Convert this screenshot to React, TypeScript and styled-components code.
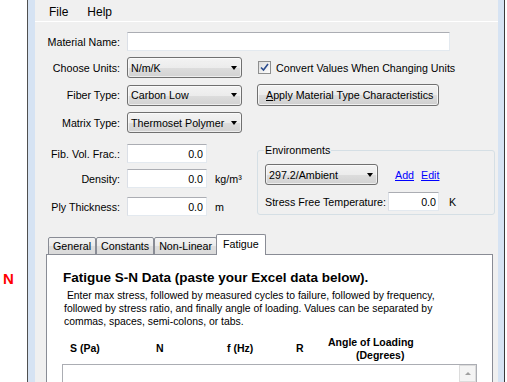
import React from "react";
import styled, { createGlobalStyle } from "styled-components";

const Global = createGlobalStyle`
  html, body { margin: 0; padding: 0; background: #fff; }
  body { font-family: "Liberation Sans", Arial, sans-serif; font-size: 10.7px; color: #000; }
  * { box-sizing: border-box; }
`;

const Page = styled.div`
  display: flex;
  width: 507px;
  height: 382px;
  overflow: hidden;
  background: #fff;
`;

const Gutter = styled.div`
  width: 27px;
  flex: none;
  padding: 271px 0 0 3px;
`;

const Marker = styled.div`
  color: #f00;
  font-weight: bold;
  font-size: 15px;
  line-height: 16px;
`;

const Frame = styled.div`
  flex: none;
  width: 478px;
  height: 100%;
  display: flex;
  border-left: 1px solid #505050;
  border-right: 1px solid #3a3a3a;
`;

const Edge = styled.div<{ $w: number }>`
  flex: none;
  width: ${(p) => p.$w}px;
  background: #d6e3f3;
`;

const Client = styled.div`
  flex: 1;
  min-width: 0;
  background: #f0f0f0;
  display: flex;
  flex-direction: column;
`;

const MenuBar = styled.div`
  height: 22px;
  flex: none;
  border-bottom: 1px solid #fff;
  display: flex;
  align-items: center;
  padding: 2px 0 0 14px;
  gap: 19px;
  font-size: 12px;
`;

const Form = styled.div`
  padding-top: 10px;
  display: flex;
  flex-direction: column;
  gap: 6px;
`;

const Row = styled.div<{ $mt?: number }>`
  display: flex;
  align-items: center;
  margin-top: ${(p) => p.$mt ?? 0}px;
`;

const Label = styled.label`
  width: 85px;
  flex: none;
  text-align: right;
  margin-right: 7px;
  white-space: nowrap;
`;

const TextBox = styled.input<{ $w: number; $right?: boolean; $pr?: number }>`
  width: ${(p) => p.$w}px;
  height: 19px;
  flex: none;
  border: 1px solid #e3e9ef;
  border-top-color: #abadb3;
  border-left-color: #dbdfe6;
  background: #fff;
  font: inherit;
  color: #000;
  padding: 0 ${(p) => p.$pr ?? 3}px 0 3px;
  text-align: ${(p) => (p.$right ? "right" : "left")};
  outline: none;
`;

const Combo = styled.div<{ $w: number }>`
  width: ${(p) => p.$w}px;
  height: 21px;
  flex: none;
  border: 1px solid #707070;
  border-radius: 3px;
  background: linear-gradient(#f3f3f3 0%, #ececec 50%, #dddddd 51%, #d2d2d2 100%);
  box-shadow: inset 0 0 0 1px rgba(255, 255, 255, 0.6);
  display: flex;
  align-items: center;
  justify-content: space-between;
  padding: 0 4px 0 3px;
  white-space: nowrap;
`;

const Arrow = styled.span`
  width: 0;
  height: 0;
  flex: none;
  border-left: 3.5px solid transparent;
  border-right: 3.5px solid transparent;
  border-top: 4px solid #000;
`;

const CheckWrap = styled.div`
  display: flex;
  align-items: center;
  margin-left: 16px;
  gap: 5px;
  white-space: nowrap;
`;

const CheckBox = styled.span`
  width: 13px;
  height: 13px;
  flex: none;
  border: 1px solid #8e8f8f;
  background: linear-gradient(135deg, #dcdcdc, #fdfdfd);
  display: flex;
  align-items: center;
  justify-content: center;
`;

const Button = styled.button`
  width: 182px;
  height: 22px;
  flex: none;
  margin-left: 15px;
  border: 1px solid #707070;
  border-radius: 3px;
  background: linear-gradient(#f2f2f2 0%, #ebebeb 50%, #dddddd 51%, #cfcfcf 100%);
  box-shadow: inset 0 0 0 1px rgba(255, 255, 255, 0.7);
  font: inherit;
  color: #000;
  text-align: left;
  padding: 0 0 0 8px;
  white-space: nowrap;
`;

const Lower = styled.div`
  display: flex;
  align-items: flex-start;
  margin-top: 11px;
`;

const LeftCol = styled.div`
  width: 222px;
  flex: none;
  display: flex;
  flex-direction: column;
`;

const Unit = styled.span<{ $ml?: number }>`
  margin-left: ${(p) => p.$ml ?? 8}px;
  white-space: nowrap;
`;

const Group = styled.fieldset`
  width: 238px;
  flex: none;
  margin: 0;
  min-width: 0;
  padding: 7px 7px 3px 7px;
  border: 1px solid #d5dfe5;
  border-radius: 3px;
`;

const Legend = styled.legend`
  padding: 0 1px;
  margin-left: -1px;
  font-size: 10.7px;
  line-height: 13px;
`;

const Link = styled.a<{ $ml: number }>`
  color: #0000ff;
  text-decoration: underline;
  margin-left: ${(p) => p.$ml}px;
  cursor: pointer;
`;

const PlainLabel = styled.span<{ $w: number }>`
  width: ${(p) => p.$w}px;
  flex: none;
  white-space: nowrap;
`;

const Tabs = styled.div`
  margin: 18px 5px 0 11px;
  flex: 1;
  min-height: 0;
  display: flex;
  flex-direction: column;
`;

const TabStrip = styled.div`
  height: 21px;
  flex: none;
  display: flex;
  align-items: flex-end;
  padding-left: 2px;
  position: relative;
  z-index: 1;
`;

const Tab = styled.div<{ $active?: boolean }>`
  height: ${(p) => (p.$active ? 21 : 18)}px;
  padding: 0 ${(p) => (p.$active ? 6 : 4)}px ${(p) => (p.$active ? 2 : 0)}px;
  margin-left: ${(p) => (p.$active ? -1 : 0)}px;
  border: 1px solid #898c95;
  border-bottom: ${(p) => (p.$active ? "none" : "1px solid #898c95")};
  border-radius: 2px 2px 0 0;
  background: ${(p) =>
    p.$active ? "#fff" : "linear-gradient(#f3f3f3 0%, #ebebeb 50%, #dedede 51%, #dadada 100%)"};
  display: flex;
  align-items: center;
  white-space: nowrap;
`;

const Panel = styled.div`
  flex: 1;
  margin-top: -1px;
  background: #fff;
  border: 1px solid #898c95;
  border-bottom: none;
  display: flex;
  flex-direction: column;
`;

const Heading = styled.div`
  font-weight: bold;
  font-size: 13.5px;
  line-height: 16px;
  padding: 15px 0 0 16px;
  white-space: nowrap;
`;

const Para = styled.div`
  margin: 3px 0 0 17px;
  font-size: 10.4px;
  line-height: 13px;
  white-space: pre;
`;

const HeaderRow = styled.div`
  margin: 7px 0 0 23px;
  height: 27px;
  display: grid;
  grid-template-columns: 86px 71px 69px 32px auto;
  align-items: center;
  font-weight: bold;
  font-size: 10.5px;
  line-height: 13px;
`;

const Indent = styled.span`
  display: block;
  padding-left: 28px;
`;

const DataBox = styled.div`
  margin: 2px 0 0 15px;
  width: 415px;
  flex: 1;
  border: 1px solid #abadb3;
  border-bottom: none;
  display: flex;
  justify-content: flex-end;
`;

const ScrollCol = styled.div`
  width: 17px;
  flex: none;
  background: #f4f4f4;
`;

const ScrollBtn = styled.div`
  height: 17px;
  border: 1px solid #dcdcdc;
  background: #f4f4f4;
  display: flex;
  align-items: center;
  justify-content: center;
`;

const UpArrow = styled.span`
  width: 0;
  height: 0;
  border-left: 3.5px solid transparent;
  border-right: 3.5px solid transparent;
  border-bottom: 3px solid #a0a0a0;
`;

export default function App() {
  return (
    <>
      <Global />
      <Page>
        <Gutter>
          <Marker>N</Marker>
        </Gutter>
        <Frame>
          <Edge $w={7} />
          <Client>
            <MenuBar>
              <span>File</span>
              <span>Help</span>
            </MenuBar>
            <Form>
              <Row>
                <Label>Material Name:</Label>
                <TextBox $w={323} defaultValue="" readOnly />
              </Row>
              <Row>
                <Label>Choose Units:</Label>
                <Combo $w={115}>
                  <span>N/m/K</span>
                  <Arrow />
                </Combo>
                <CheckWrap>
                  <CheckBox>
                    <svg width="9" height="9" viewBox="0 0 9 9">
                      <path d="M1 4.5 L3.5 7 L8 1" fill="none" stroke="#2a4b8d" strokeWidth="1.6" />
                    </svg>
                  </CheckBox>
                  <span>Convert Values When Changing Units</span>
                </CheckWrap>
              </Row>
              <Row>
                <Label>Fiber Type:</Label>
                <Combo $w={115}>
                  <span>Carbon Low</span>
                  <Arrow />
                </Combo>
                <Button>
                  <u>A</u>pply Material Type Characteristics
                </Button>
              </Row>
              <Row>
                <Label>Matrix Type:</Label>
                <Combo $w={115}>
                  <span>Thermoset Polymer</span>
                  <Arrow />
                </Combo>
              </Row>
            </Form>
            <Lower>
              <LeftCol>
                <Row>
                  <Label>Fib. Vol. Frac.:</Label>
                  <TextBox $w={80} $right defaultValue="0.0" readOnly />
                </Row>
                <Row $mt={6}>
                  <Label>Density:</Label>
                  <TextBox $w={80} $right defaultValue="0.0" readOnly />
                  <Unit>kg/m³</Unit>
                </Row>
                <Row $mt={9}>
                  <Label>Ply Thickness:</Label>
                  <TextBox $w={80} $right defaultValue="0.0" readOnly />
                  <Unit>m</Unit>
                </Row>
              </LeftCol>
              <Group>
                <Legend>Environments</Legend>
                <Row>
                  <Combo $w={113}>
                    <span>297.2/Ambient</span>
                    <Arrow />
                  </Combo>
                  <Link $ml={17}>Add</Link>
                  <Link $ml={7}>Edit</Link>
                </Row>
                <Row $mt={7}>
                  <PlainLabel $w={123}>Stress Free Temperature:</PlainLabel>
                  <TextBox $w={51} $right $pr={2} defaultValue="0.0" readOnly />
                  <Unit $ml={10}>K</Unit>
                </Row>
              </Group>
            </Lower>
            <Tabs>
              <TabStrip>
                <Tab>General</Tab>
                <Tab>Constants</Tab>
                <Tab>Non-Linear</Tab>
                <Tab $active>Fatigue</Tab>
              </TabStrip>
              <Panel>
                <Heading>Fatigue S-N Data (paste your Excel data below).</Heading>
                <Para>
                  {" Enter max stress, followed by measured cycles to failure, followed by frequency,\nfollowed by stress ratio, and finally angle of loading. Values can be separated by\ncommas, spaces, semi-colons, or tabs."}
                </Para>
                <HeaderRow>
                  <span>S (Pa)</span>
                  <span>N</span>
                  <span>f (Hz)</span>
                  <span>R</span>
                  <span>
                    Angle of Loading
                    <Indent>(Degrees)</Indent>
                  </span>
                </HeaderRow>
                <DataBox>
                  <ScrollCol>
                    <ScrollBtn>
                      <UpArrow />
                    </ScrollBtn>
                  </ScrollCol>
                </DataBox>
              </Panel>
            </Tabs>
          </Client>
          <Edge $w={6} />
        </Frame>
      </Page>
    </>
  );
}
